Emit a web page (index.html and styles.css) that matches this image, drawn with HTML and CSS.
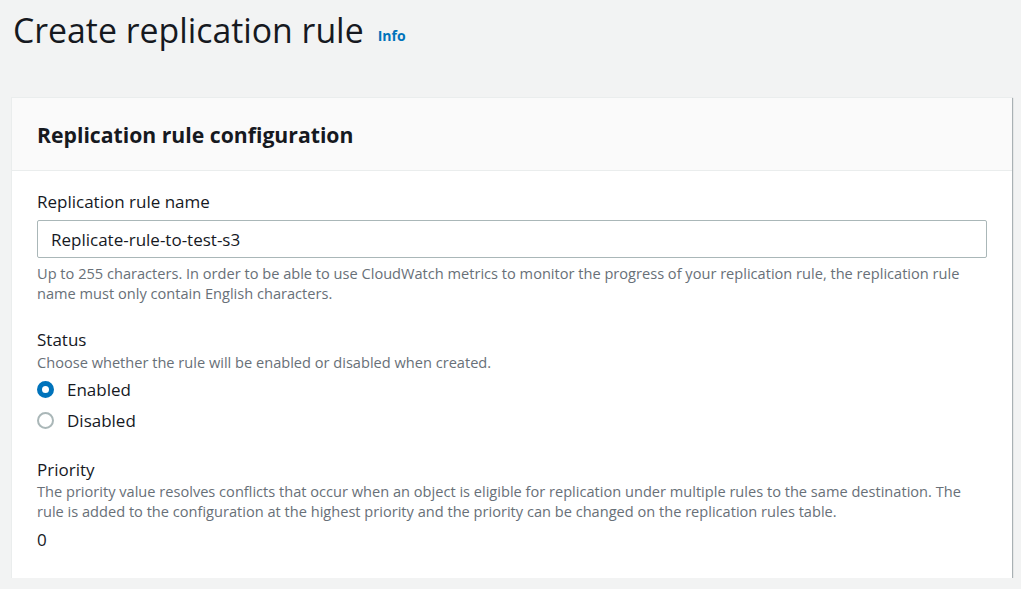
FILE: index.html
```html
<!DOCTYPE html>
<html lang="en">
<head>
<meta charset="utf-8">
<title>Create replication rule</title>
<link rel="stylesheet" href="styles.css">
</head>
<body>
<div class="page">
  <div class="page-header">
    <h1 class="title">Create replication rule</h1>
    <a class="info" href="#">Info</a>
  </div>
  <section class="card">
    <div class="card-header">
      <h2 class="card-title">Replication rule configuration</h2>
    </div>
    <div class="card-body">
      <div class="field field-name">
        <label class="label" for="rname">Replication rule name</label>
        <input class="input" id="rname" type="text" value="Replicate-rule-to-test-s3">
        <p class="hint">Up to 255 characters. In order to be able to use CloudWatch metrics to monitor the progress of your replication rule, the replication rule name must only contain English characters.</p>
      </div>
      <div class="field field-status">
        <div class="label">Status</div>
        <p class="desc">Choose whether the rule will be enabled or disabled when created.</p>
        <div class="radios">
          <label class="radio"><span class="dot checked"></span><span class="radio-text">Enabled</span></label>
          <label class="radio"><span class="dot"></span><span class="radio-text">Disabled</span></label>
        </div>
      </div>
      <div class="field">
        <div class="label">Priority</div>
        <p class="desc desc-priority">The priority value resolves conflicts that occur when an object is eligible for replication under multiple rules to the same destination. The rule is added to the configuration at the highest priority and the priority can be changed on the replication rules table.</p>
        <div class="value">0</div>
      </div>
    </div>
  </section>
</div>
</body>
</html>
```

FILE: styles.css
```css
* { box-sizing: border-box; }
html, body { margin: 0; padding: 0; }
body {
  background: #f2f3f3;
  font-family: "Open Sans", "Noto Sans", sans-serif;
  color: #16191f;
}
.page { padding: 0 9px 0 11px; }
.page-header {
  display: flex;
  align-items: baseline;
  gap: 14px;
  padding: 8px 0 0 2px;
  height: 97px;
}
.title {
  margin: 0;
  font-weight: 400;
  font-size: 33.8px;
  line-height: 44px;
  color: #16191f;
}
.info {
  font-size: 14px;
  font-weight: 700;
  color: #0073bb;
  text-decoration: none;
  position: relative;
  top: -2px;
}
.card {
  background: #fff;
  border-top: 1px solid #eaeded;
  border-left: 1px solid #eaeded;
  box-shadow: 1px 1px 1px 0 rgba(0, 28, 36, 0.3);
}
.card-header {
  background: #fafafa;
  border-bottom: 1px solid #eaeded;
  height: 73px;
  display: flex;
  align-items: center;
  padding: 0 25px;
}
.card-title {
  margin: 0;
  font-size: 21.2px;
  font-weight: 700;
  color: #16191f;
}
.card-body { padding: 19px 25px 26px; }
.field-name { margin-bottom: 25px; }
.field-status { margin-bottom: 22px; }
.label {
  display: block;
  font-size: 17px;
  line-height: 24px;
  color: #16191f;
}
.input {
  display: block;
  width: 950px;
  height: 38px;
  margin-top: 6px;
  border: 1px solid #aab7b8;
  border-radius: 2px;
  padding: 0 13px;
  font-family: inherit;
  font-size: 17px;
  color: #16191f;
  background: #fff;
}
.hint, .desc {
  margin: 0;
  font-size: 14.6px;
  line-height: 20px;
  color: #687078;
}
.hint { margin-top: 5px; }
.desc-priority { margin-top: -1px; }
.radios { margin-top: 2px; }
.radio {
  display: flex;
  align-items: center;
  gap: 13px;
  height: 31px;
}
.dot {
  width: 17px;
  height: 17px;
  border-radius: 50%;
  border: 2px solid #aab7b8;
  background: #fff;
}
.dot.checked {
  border: 5px solid #0073bb;
}
.radio-text { font-size: 17px; color: #16191f; }
.value {
  margin-top: 7px;
  font-size: 17px;
  line-height: 24px;
}
```
